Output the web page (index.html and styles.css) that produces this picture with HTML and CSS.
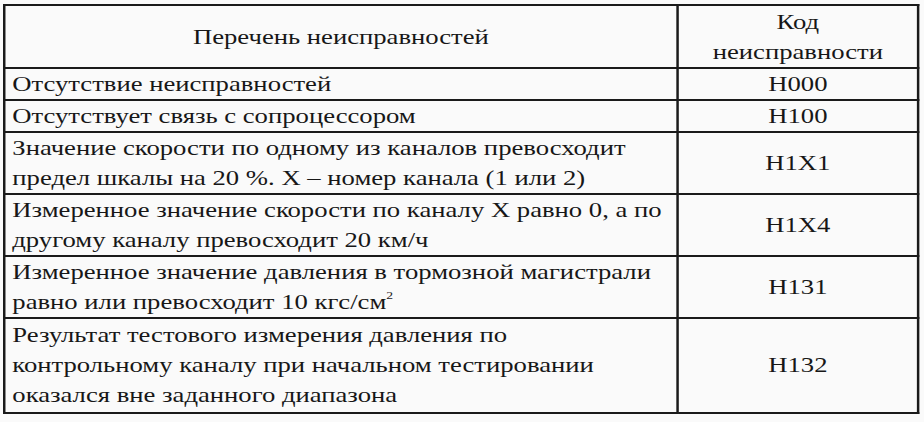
FILE: index.html
```html
<!DOCTYPE html>
<html lang="ru">
<head>
<meta charset="utf-8">
<title>Коды неисправностей</title>
<link rel="stylesheet" href="styles.css">
</head>
<body>
<div class="sheet">
<table class="faults">
  <tr class="head">
    <th class="desc">Перечень неисправностей</th>
    <th class="code">Код<br>неисправности</th>
  </tr>
  <tr>
    <td class="desc">Отсутствие неисправностей</td>
    <td class="code">Н000</td>
  </tr>
  <tr>
    <td class="desc">Отсутствует связь с сопроцессором</td>
    <td class="code">Н100</td>
  </tr>
  <tr>
    <td class="desc">Значение скорости по одному из каналов превосходит<br>предел шкалы на 20 %. Х – номер канала (1 или 2)</td>
    <td class="code">Н1Х1</td>
  </tr>
  <tr>
    <td class="desc">Измеренное значение скорости по каналу Х равно 0, а по<br>другому каналу превосходит 20 км/ч</td>
    <td class="code">Н1Х4</td>
  </tr>
  <tr>
    <td class="desc">Измеренное значение давления в тормозной магистрали<br>равно или превосходит 10 кгс/см<sup class="sq">2</sup></td>
    <td class="code">Н131</td>
  </tr>
  <tr class="last">
    <td class="desc">Результат тестового измерения давления по<br>контрольному каналу при начальном тестировании<br>оказался вне заданного диапазона</td>
    <td class="code">Н132</td>
  </tr>
</table>
</div>
</body>
</html>
```

FILE: styles.css
```css
html, body {
  margin: 0;
  padding: 0;
  background: #fafafa;
}

body {
  padding: 4px 0 0 3px;
  color: #171717;
}

/* the source scan is stretched horizontally */
.sheet {
  width: 739px;
  transform: scaleX(1.24);
  transform-origin: 0 0;
}

.faults {
  border-collapse: collapse;
  width: 739px;
  font-family: "Liberation Serif", "Times New Roman", serif;
  font-size: 21.5px;
  line-height: 30px;
}

.faults th,
.faults td {
  border: 2px solid #1a1a1a;
  padding: 0 5px 0 5.5px;
  font-family: inherit;
  font-weight: normal;
  vertical-align: middle;
}

.faults .head th {
  padding-top: 1px;
}

.faults .last td {
  padding-top: 1px;
  padding-bottom: 2px;
}

.faults .desc {
  width: 530px;
  text-align: left;
}

.faults th.desc {
  text-align: center;
}

.faults .code {
  text-align: center;
}

.sq {
  font-size: 11px;
  line-height: 0;
  vertical-align: 10px;
}
```
